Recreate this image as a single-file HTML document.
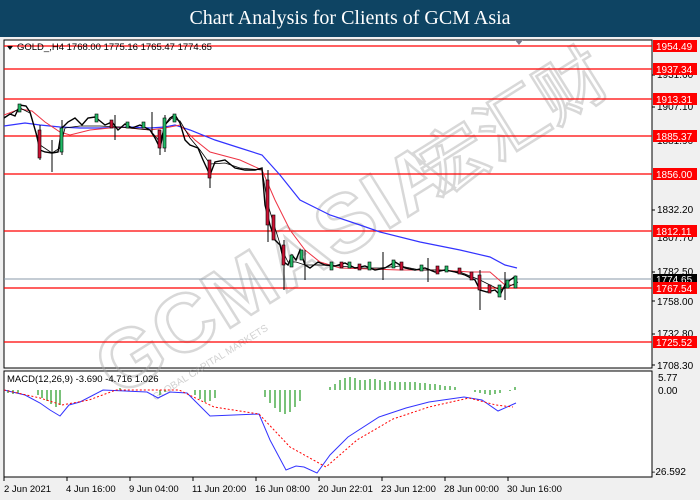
<!DOCTYPE html>
<html><head><meta charset="utf-8"><style>
body{margin:0;width:700px;height:500px;overflow:hidden;background:#f0f0f0;font-family:"Liberation Sans",sans-serif}
.t{position:absolute;left:0;top:0;width:700px;height:37px;background:#0e4463;color:#fff;font:20px "Liberation Serif",serif;text-align:center;line-height:37px}
svg{position:absolute;left:0;top:0}
</style></head><body>
<div class="t">Chart Analysis for Clients of GCM Asia</div>
<svg width="700" height="500" viewBox="0 0 700 500" font-family="Liberation Sans, sans-serif" font-size="10">
<rect x="0" y="37" width="700" height="463" fill="#f0f0f0"/>
<rect x="4" y="40" width="648" height="328" fill="#fff" stroke="#000"/>
<rect x="4" y="371" width="648" height="106" fill="#fff" stroke="#000"/>
<!-- watermark -->
<g transform="translate(118,398) rotate(-32)" opacity="0.45">
<text x="0" y="0" font-size="82" font-weight="bold" fill="none" stroke="#aaa" stroke-width="2.5" letter-spacing="2">GCMASIA</text>
<text x="375" y="0" font-size="70" fill="none" stroke="#aaa" stroke-width="2.5" font-family="Noto Sans CJK SC, sans-serif">宏汇财</text>
<text x="30" y="22" font-size="10" fill="#999">GLOBAL CAPITAL MARKETS</text>
</g>
<!-- horizontal lines -->
<g stroke="#f00" stroke-width="1.2">
<line x1="4" x2="652" y1="46" y2="46"/><line x1="4" x2="652" y1="69" y2="69"/>
<line x1="4" x2="652" y1="99" y2="99"/><line x1="4" x2="652" y1="136" y2="136"/>
<line x1="4" x2="652" y1="174" y2="174"/><line x1="4" x2="652" y1="231" y2="231"/>
<line x1="4" x2="652" y1="288" y2="288"/><line x1="4" x2="652" y1="342" y2="342"/>
</g>
<line x1="4" x2="652" y1="279" y2="279" stroke="#8899aa"/>
<!-- MAs -->
<polyline fill="none" stroke="#3333ff" stroke-width="1.2" points="4,126 25,123 40,125 60,127 80,128 100,128 130,127 150,128 165,127 175,125 190,130 215,140 240,148 262,155 280,175 300,200 330,215 360,225 380,232 420,242 460,250 490,257 505,265 517,268"/>
<polyline fill="none" stroke="#ee3344" stroke-width="1" points="4,115 20,109 32,111 45,122 60,132 70,135 90,130 120,127 150,130 165,128 180,125 195,140 210,152 240,160 262,170 275,200 290,230 305,250 320,262 340,268 400,270 440,270 470,272 490,272 505,285 517,285"/>
<polyline fill="none" stroke="#000" stroke-width="0.8" points="4,118 20,108 30,113 40,145 52,153 60,148 65,128 80,126 100,126 120,127 150,130 160,142 165,125 172,118 180,121 190,138 200,150 210,164 225,163 240,168 262,170 268,205 275,228 282,250 288,262 296,262 305,265 320,265 340,266 360,268 380,268 400,266 420,270 440,270 460,272 480,280 490,285 500,290 508,287 518,282"/>
<polyline fill="none" stroke="#000" stroke-width="1.4" points="4,118 10,114 15,116 20,105 26,106 30,112 36,133 40,150 45,152 52,153 58,152 62,128 68,122 75,118 82,125 88,118 95,117 105,125 112,122 118,130 125,124 132,128 140,125 150,130 155,138 160,148 165,125 170,118 175,115 180,123 185,140 190,145 198,148 203,160 210,175 215,162 225,160 235,168 245,170 255,170 262,168 265,205 270,225 275,240 280,245 284,262 288,265 292,255 296,260 300,250 305,265 310,268 318,262 325,265 335,266 345,263 355,268 365,266 375,270 385,268 395,262 405,268 415,270 425,268 435,272 445,270 455,272 465,275 475,280 480,290 487,292 495,290 500,295 505,285 510,280 516,276"/>
<g stroke="#000" stroke-width="1">
<line x1="40" x2="40" y1="125" y2="160"/><line x1="52" x2="52" y1="140" y2="172"/><line x1="62" x2="62" y1="120" y2="155"/>
<line x1="115" x2="115" y1="115" y2="140"/><line x1="152" x2="152" y1="112" y2="134"/>
<line x1="160" x2="160" y1="130" y2="155"/><line x1="165" x2="165" y1="115" y2="152"/><line x1="210" x2="210" y1="160" y2="188"/>
<line x1="268" x2="268" y1="170" y2="242"/><line x1="284" x2="284" y1="240" y2="290"/><line x1="305" x2="305" y1="250" y2="280"/>
<line x1="383" x2="383" y1="252" y2="280"/><line x1="428" x2="428" y1="258" y2="282"/><line x1="480" x2="480" y1="270" y2="310"/><line x1="505" x2="505" y1="272" y2="300"/>
</g>
<g fill="#22bb66" stroke="#000" stroke-width="0.6">
<rect x="18" y="104" width="3" height="8"/><rect x="60" y="128" width="3" height="24"/><rect x="95" y="114" width="3" height="8"/>
<rect x="126" y="122" width="3" height="6"/><rect x="142" y="122" width="3" height="6"/>
<rect x="163" y="118" width="3" height="30"/><rect x="173" y="114" width="3" height="8"/><rect x="290" y="255" width="3" height="12"/>
<rect x="300" y="250" width="3" height="10"/><rect x="330" y="262" width="3" height="8"/><rect x="348" y="262" width="3" height="6"/>
<rect x="368" y="262" width="3" height="8"/><rect x="392" y="260" width="3" height="8"/><rect x="420" y="265" width="3" height="6"/>
<rect x="445" y="266" width="3" height="6"/><rect x="498" y="285" width="3" height="12"/>
<rect x="506" y="280" width="3" height="8"/><rect x="514" y="276" width="3" height="12"/>
</g>
<g fill="#cc1133" stroke="#000" stroke-width="0.6">
<rect x="38" y="130" width="3" height="28"/><rect x="110" y="120" width="3" height="8"/><rect x="158" y="130" width="3" height="18"/><rect x="208" y="160" width="3" height="18"/>
<rect x="266" y="180" width="3" height="45"/><rect x="272" y="215" width="3" height="25"/><rect x="282" y="245" width="3" height="20"/>
<rect x="340" y="262" width="3" height="6"/><rect x="358" y="264" width="3" height="6"/><rect x="400" y="262" width="3" height="8"/>
<rect x="436" y="266" width="3" height="8"/><rect x="458" y="268" width="3" height="6"/>
<rect x="470" y="272" width="3" height="8"/><rect x="478" y="275" width="3" height="15"/><rect x="488" y="285" width="3" height="8"/>
</g>
<!-- title text -->
<path d="M7,46 L13,46 L10,50Z" fill="#000"/>
<text x="17" y="50" font-size="9.5" fill="#000">GOLD_,H4  1768.00 1775.16 1765.47 1774.65</text>
<path d="M515,40 L523,40 L519,45Z" fill="#778"/>
<!-- price axis -->
<g font-size="10" fill="#000">
<text x="657" y="78">1931.60</text><text x="657" y="110">1907.10</text><text x="657" y="144">1881.90</text>
<text x="657" y="213">1832.20</text><text x="657" y="241">1807.70</text><text x="657" y="275">1782.50</text>
<text x="657" y="305">1758.00</text><text x="657" y="337">1732.80</text><text x="657" y="369">1708.30</text>
<text x="658" y="381">5.77</text><text x="658" y="394">0.00</text><text x="652" y="475">-26.592</text>
</g>
<g stroke="#000"><line x1="652" x2="655" y1="75" y2="75"/><line x1="652" x2="655" y1="107" y2="107"/><line x1="652" x2="655" y1="210" y2="210"/><line x1="652" x2="655" y1="272" y2="272"/><line x1="652" x2="655" y1="301" y2="301"/><line x1="652" x2="655" y1="334" y2="334"/><line x1="652" x2="655" y1="365" y2="365"/></g>
<g font-size="10">
<rect x="653" y="40" width="44" height="12" fill="#f00"/><text x="656" y="50" fill="#fff">1954.49</text>
<rect x="653" y="63" width="44" height="12" fill="#f00"/><text x="656" y="73" fill="#fff">1937.34</text>
<rect x="653" y="93" width="44" height="12" fill="#f00"/><text x="656" y="103" fill="#fff">1913.31</text>
<rect x="653" y="130" width="44" height="12" fill="#f00"/><text x="656" y="140" fill="#fff">1885.37</text>
<rect x="653" y="168" width="44" height="12" fill="#f00"/><text x="656" y="178" fill="#fff">1856.00</text>
<rect x="653" y="225" width="44" height="12" fill="#f00"/><text x="656" y="235" fill="#fff">1812.11</text>
<rect x="653" y="274" width="44" height="10" fill="#000"/><text x="656" y="283" fill="#fff">1774.65</text>
<rect x="653" y="282" width="44" height="12" fill="#f00"/><text x="656" y="292" fill="#fff">1767.54</text>
<rect x="653" y="336" width="44" height="12" fill="#f00"/><text x="656" y="346" fill="#fff">1725.52</text>
</g>
<!-- MACD -->
<text x="7" y="382" font-size="9.5">MACD(12,26,9) -3.690 -4.716 1.026</text>
<g stroke="#229922" stroke-width="1.2">
<line x1="8" x2="8" y1="390" y2="393"/><line x1="13" x2="13" y1="390" y2="394"/><line x1="18" x2="18" y1="390" y2="393"/>
<line x1="38" x2="38" y1="390" y2="395"/><line x1="42" x2="42" y1="390" y2="398"/><line x1="47" x2="47" y1="390" y2="401"/><line x1="51" x2="51" y1="390" y2="404"/><line x1="56" x2="56" y1="390" y2="407"/><line x1="60" x2="60" y1="390" y2="405"/>
<line x1="120" x2="120" y1="388" y2="390"/><line x1="160" x2="160" y1="390" y2="395"/><line x1="165" x2="165" y1="390" y2="392"/>
<line x1="195" x2="195" y1="390" y2="395"/><line x1="200" x2="200" y1="390" y2="399"/><line x1="205" x2="205" y1="390" y2="402"/><line x1="210" x2="210" y1="390" y2="401"/><line x1="215" x2="215" y1="390" y2="398"/>
<line x1="265" x2="265" y1="390" y2="397"/><line x1="270" x2="270" y1="390" y2="403"/><line x1="275" x2="275" y1="390" y2="408"/><line x1="280" x2="280" y1="390" y2="412"/><line x1="285" x2="285" y1="390" y2="414"/><line x1="290" x2="290" y1="390" y2="412"/><line x1="295" x2="295" y1="390" y2="407"/><line x1="300" x2="300" y1="390" y2="401"/>
<line x1="330" x2="330" y1="387" y2="390"/><line x1="335" x2="335" y1="384" y2="390"/><line x1="340" x2="340" y1="380" y2="390"/><line x1="345" x2="345" y1="378" y2="390"/><line x1="350" x2="350" y1="377" y2="390"/><line x1="355" x2="355" y1="378" y2="390"/><line x1="360" x2="360" y1="380" y2="390"/><line x1="365" x2="365" y1="380" y2="390"/><line x1="370" x2="370" y1="379" y2="390"/><line x1="375" x2="375" y1="379" y2="390"/><line x1="380" x2="380" y1="380" y2="390"/><line x1="385" x2="385" y1="382" y2="390"/><line x1="390" x2="390" y1="381" y2="390"/><line x1="395" x2="395" y1="382" y2="390"/><line x1="400" x2="400" y1="382" y2="390"/><line x1="405" x2="405" y1="382" y2="390"/><line x1="410" x2="410" y1="382" y2="390"/><line x1="415" x2="415" y1="382" y2="390"/><line x1="420" x2="420" y1="383" y2="390"/><line x1="425" x2="425" y1="383" y2="390"/><line x1="430" x2="430" y1="384" y2="390"/><line x1="435" x2="435" y1="384" y2="390"/><line x1="440" x2="440" y1="385" y2="390"/><line x1="445" x2="445" y1="386" y2="390"/><line x1="450" x2="450" y1="386" y2="390"/><line x1="455" x2="455" y1="387" y2="390"/>
<line x1="475" x2="475" y1="390" y2="392"/><line x1="480" x2="480" y1="390" y2="393"/><line x1="485" x2="485" y1="390" y2="394"/><line x1="490" x2="490" y1="390" y2="395"/><line x1="495" x2="495" y1="390" y2="394"/><line x1="500" x2="500" y1="390" y2="393"/><line x1="510" x2="510" y1="390" y2="391"/><line x1="515" x2="515" y1="387" y2="390"/>
</g>
<polyline fill="none" stroke="#3333ff" stroke-width="1" points="4,390 25,395 40,403 50,410 60,416 69,405 80,402 103,390 147,392 158,398 170,392 187,393 210,416 259,414 270,440 286,470 296,466 304,467 317,473 330,455 348,437 379,417 406,408 429,402 464,397 482,400 498,411 516,403"/>
<polyline fill="none" stroke="#f00" stroke-width="1" stroke-dasharray="2,2" points="4,390 40,398 62,405 89,400 116,390 179,390 214,407 259,414 290,447 326,467 357,440 393,419 429,407 469,398 496,405 513,407"/>
<!-- date axis -->
<g stroke="#000"><line x1="4" x2="4" y1="477" y2="481"/><line x1="67" x2="67" y1="477" y2="481"/><line x1="130" x2="130" y1="477" y2="481"/><line x1="193" x2="193" y1="477" y2="481"/><line x1="256" x2="256" y1="477" y2="481"/><line x1="319" x2="319" y1="477" y2="481"/><line x1="382" x2="382" y1="477" y2="481"/><line x1="445" x2="445" y1="477" y2="481"/><line x1="508" x2="508" y1="477" y2="481"/></g>
<g font-size="9.5"><text x="4" y="492">2 Jun 2021</text><text x="66" y="492">4 Jun 16:00</text><text x="129" y="492">9 Jun 04:00</text><text x="192" y="492">11 Jun 20:00</text><text x="255" y="492">16 Jun 08:00</text><text x="318" y="492">20 Jun 22:01</text><text x="381" y="492">23 Jun 12:00</text><text x="444" y="492">28 Jun 00:00</text><text x="507" y="492">30 Jun 16:00</text></g>
</svg>
</body></html>
